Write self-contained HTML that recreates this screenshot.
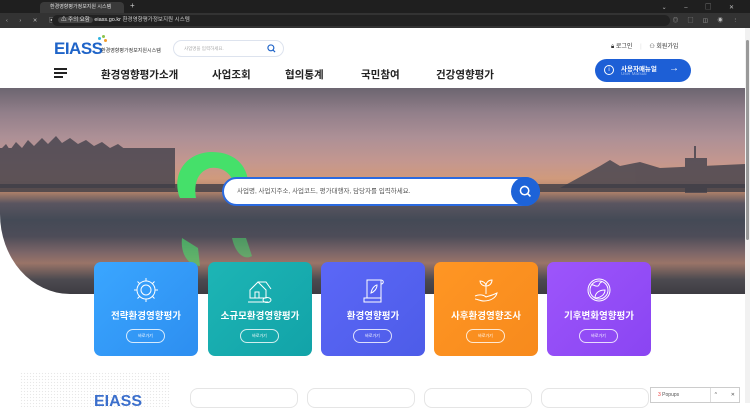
<!DOCTYPE html>
<html><head><meta charset="utf-8"><style>
*{margin:0;padding:0;box-sizing:border-box}
body{width:750px;height:403px;overflow:hidden;background:#fff;font-family:"Liberation Sans","Noto Sans CJK KR",sans-serif;position:relative}
.tabbar{position:absolute;left:0;top:0;width:750px;height:13px;background:#1f1f1f}
.tab{position:absolute;left:40px;top:2px;width:84px;height:11px;background:#3a3a3a;border-radius:4px 4px 0 0;color:#ddd;font-size:5px;line-height:11px;padding-left:10px}
.addr{position:absolute;left:0;top:13px;width:750px;height:15px;background:#333;color:#bbb;font-size:5.5px}
.url{position:absolute;left:52px;top:2px;height:11px;background:#222;border-radius:6px;line-height:11px;padding-left:6px;color:#ccc}
.hero{position:absolute;left:0;top:88px;width:745px;height:206px;border-bottom-left-radius:70px 80px;overflow:hidden;
background:linear-gradient(180deg,#6c6570 0%,#927f8a 12%,#ad9096 24%,#c4978f 36%,#d09a7c 44%,#b4846a 50%,#5a5560 56%,#444a56 64%,#4d4c58 72%,#7d6668 80%,#9a7468 85%,#4c4a50 93%,#3d3c42 100%)}
.sc{position:absolute;right:0;top:28px;width:5px;height:375px;background:#f1f1f1}
.sc i{position:absolute;left:1px;top:12px;width:3px;height:200px;background:#999;border-radius:2px}
.nav span{position:absolute;top:67px;font-size:10.5px;font-weight:bold;color:#222}
.card{position:absolute;top:262px;width:104px;height:94px;border-radius:7px;color:#fff;text-align:center}
.card b{position:absolute;left:0;right:0;top:46px;font-size:9.5px}
.card i{position:absolute;left:32px;top:67px;width:39px;height:14px;border:1px solid rgba(255,255,255,.8);border-radius:8px;font-style:normal;font-size:4px;line-height:12px}
.card svg{position:absolute;left:38px;top:14px}
.bx{position:absolute;top:388px;width:108px;height:20px;border:1px solid #e5e5e5;border-radius:8px}
</style></head><body>
<div class="tabbar"><div class="tab">환경영향평가정보지원 시스템</div><span style="position:absolute;left:130px;top:1px;color:#ccc;font-size:8px">+</span>
<span style="position:absolute;right:8px;top:2px;color:#bbb;font-size:6px;letter-spacing:8px">⌄ – ▢ ✕</span></div>
<div class="addr"><span style="position:absolute;left:6px;top:3px;letter-spacing:5px">‹ › ✕ ▣</span>
<div class="url" style="right:80px"><span style="background:#444;border-radius:4px;padding:0 3px;color:#ddd">⚠ 주의 요함</span> <span style="color:#eee">eiass.go.kr</span> 환경영향평가정보지원 시스템</div>
<span style="position:absolute;right:8px;top:3px;letter-spacing:4px">◎ ▢ ◫ ◉ ⋮</span></div>

<div style="position:absolute;left:54px;top:39px;font-size:17px;font-weight:bold;color:#1f64c8;letter-spacing:-0.5px">EIASS</div>
<div style="position:absolute;left:98px;top:37px;width:3px;height:3px;background:#30b3e0;border-radius:50%"></div>
<div style="position:absolute;left:102px;top:35px;width:3px;height:3px;background:#8bc34a;border-radius:50%"></div>
<div style="position:absolute;left:104px;top:39px;width:3px;height:3px;background:#f39c2b;border-radius:50%"></div>
<div style="position:absolute;left:101px;top:47px;font-size:5px;color:#333">환경영향평가정보지원시스템</div>
<div style="position:absolute;left:173px;top:40px;width:111px;height:17px;border:1px solid #dde3ee;border-radius:9px;font-size:4.5px;color:#aaa;line-height:15px;padding-left:10px">사업명을 입력하세요.
<svg style="position:absolute;right:7px;top:3px" width="9" height="9" viewBox="0 0 10 10"><circle cx="4.3" cy="4.3" r="3.3" fill="none" stroke="#1f64c8" stroke-width="1.3"/><path d="M6.7 6.7L9 9" stroke="#1f64c8" stroke-width="1.3"/></svg></div>
<div style="position:absolute;left:611px;top:41px;font-size:6px;color:#333">🔒︎ 로그인 <span style="color:#ddd;margin:0 6px">|</span> ⚇ 회원가입</div>
<div style="position:absolute;left:54px;top:68px;width:13px;height:1.5px;background:#222"></div>
<div style="position:absolute;left:54px;top:72px;width:13px;height:1.5px;background:#222"></div>
<div style="position:absolute;left:54px;top:76px;width:9px;height:1.5px;background:#222"></div>
<div class="nav"><span style="left:101px">환경영향평가소개</span><span style="left:212px">사업조회</span><span style="left:285px">협의통계</span><span style="left:361px">국민참여</span><span style="left:436px">건강영향평가</span></div>
<div style="position:absolute;left:595px;top:59px;width:96px;height:23px;border-radius:12px;background:#1d5fd6;color:#fff">
<div style="position:absolute;left:9px;top:6px;width:10px;height:10px;border:1px solid #fff;border-radius:50%;font-size:6px;text-align:center;line-height:8px">i</div>
<div style="position:absolute;left:26px;top:4px;font-size:6.5px;font-weight:bold">사용자매뉴얼</div>
<div style="position:absolute;left:26px;top:12px;font-size:4.5px;color:#9dbbf0">User Manual</div>
<div style="position:absolute;left:74px;top:4px;font-size:10px">→</div></div>

<div class="hero">
<svg width="745" height="206" style="position:absolute;left:0;top:0">
<g fill="#4a4650" opacity=".85">
<path d="M0 62 L6 56 L10 62 L16 54 L22 60 L28 52 L34 58 L42 50 L48 56 L56 48 L62 55 L70 50 L78 56 L86 52 L94 58 L102 54 L110 60 L118 56 L126 62 L134 60 L142 66 L160 64 L175 72 L175 100 L0 100Z"/>
<rect x="0" y="60" width="175" height="40"/>
<rect x="685" y="70" width="22" height="35"/><rect x="694" y="58" width="2" height="14"/>
<path d="M600 78 L610 72 L620 78 L640 74 L660 80 L745 76 L745 100 L560 100Z"/>
</g>
<rect x="0" y="96" width="745" height="8" fill="#3e3d46" opacity=".8"/>
<path d="M180 110 C172 90 182 66 210 64 C236 63 250 80 248 100 L234 100 C234 86 222 78 210 80 C196 84 194 98 196 110Z" fill="#45e06a"/>
<path d="M182 150 C180 168 190 178 200 178 L198 160 Z" fill="#45e06a" opacity=".6"/>
<path d="M232 150 C236 168 246 172 252 168 L246 150Z" fill="#45e06a" opacity=".5"/>
</svg>
<div style="position:absolute;left:222px;top:89px;width:318px;height:29px;border:2px solid #2a6ae0;border-radius:15px;background:#fff;font-size:6.5px;color:#555;line-height:25px;padding-left:13px">사업명, 사업지주소, 사업코드, 평가대행자, 담당자를 입력하세요.</div>
<div style="position:absolute;left:511px;top:89px;width:29px;height:29px;border-radius:50%;background:#1d63d8">
<svg style="position:absolute;left:8px;top:8px" width="13" height="13" viewBox="0 0 10 10"><circle cx="4.3" cy="4.3" r="3.2" fill="none" stroke="#fff" stroke-width="1.2"/><path d="M6.6 6.6L8.8 8.8" stroke="#fff" stroke-width="1.2"/></svg></div>
</div>
<div class="sc"><i></i></div>

<div class="card" style="left:94px;background:linear-gradient(135deg,#3aa6ff,#2d8ef0)"><svg width="28" height="28" viewBox="0 0 28 28" fill="none" stroke="#fff" stroke-width="1"><circle cx="14" cy="14" r="9"/><circle cx="14" cy="14" r="5"/><path d="M14 2v3M14 23v3M2 14h3M23 14h3M5.5 5.5l2 2M20.5 20.5l2 2M5.5 22.5l2-2M20.5 7.5l2-2"/></svg><b>전략환경영향평가</b><i>바로가기</i></div>
<div class="card" style="left:208px;background:linear-gradient(135deg,#1db5b5,#12a3a8)"><svg width="28" height="28" viewBox="0 0 28 28" fill="none" stroke="#fff" stroke-width="1"><path d="M4 14L12 6L20 14V22H4Z"/><path d="M9 22V16H13V22"/><path d="M12 6H20L25 13"/><path d="M2 26H22"/><ellipse cx="21" cy="24" rx="4" ry="2.5"/></svg><b>소규모환경영향평가</b><i>바로가기</i></div>
<div class="card" style="left:321px;background:linear-gradient(135deg,#5b67f7,#4d5ce8)"><svg width="28" height="28" viewBox="0 0 28 28" fill="none" stroke="#fff" stroke-width="1"><path d="M8 4H22V22H8Z"/><path d="M5 22H22V26H5Z"/><path d="M22 4C25 4 25 8 22 8"/><path d="M12 17C13 11 17 9 18 9C18 13 15 16 12 17Z"/></svg><b>환경영향평가</b><i>바로가기</i></div>
<div class="card" style="left:434px;background:linear-gradient(135deg,#ff9624,#f78a1c)"><svg width="28" height="28" viewBox="0 0 28 28" fill="none" stroke="#fff" stroke-width="1"><path d="M14 18V8"/><path d="M14 10C10 10 8 7 8 5C11 5 14 7 14 10Z"/><path d="M14 10C18 10 20 7 20 4C17 4 14 6 14 10Z"/><path d="M3 20C8 18 12 19 14 21C17 20 21 19 25 17C24 22 18 25 12 25C8 25 5 23 3 23"/></svg><b>사후환경영향조사</b><i>바로가기</i></div>
<div class="card" style="left:547px;background:linear-gradient(135deg,#9d55fb,#8a45f2)"><svg width="28" height="28" viewBox="0 0 28 28" fill="none" stroke="#fff" stroke-width="1"><circle cx="14" cy="14" r="11"/><circle cx="14" cy="14" r="9"/><path d="M6 9C9 8 10 11 13 10C15 9 14 6 17 6"/><path d="M10 22C10 17 14 14 20 14C20 19 15 22 10 22Z"/></svg><b>기후변화영향평가</b><i>바로가기</i></div>

<div style="position:absolute;left:20px;top:372px;width:150px;height:35px;background-image:radial-gradient(#ddd 0.7px,transparent 0.8px);background-size:3px 3px;opacity:.7"></div>
<div style="position:absolute;left:94px;top:393px;font-size:16px;font-weight:bold;color:#3b6fcc">EIASS</div>
<div class="bx" style="left:190px"></div><div class="bx" style="left:307px"></div><div class="bx" style="left:424px"></div><div class="bx" style="left:541px"></div>
<div style="position:absolute;left:650px;top:387px;width:90px;height:16px;background:#fff;border:1px solid #ccc;font-size:5px;line-height:14px;padding-left:7px;color:#555"><span style="color:#e33">3</span> Popups<span style="position:absolute;right:22px;top:0;border-left:1px solid #ddd;padding-left:4px">^</span><span style="position:absolute;right:4px;top:0">✕</span></div>
</body></html>
